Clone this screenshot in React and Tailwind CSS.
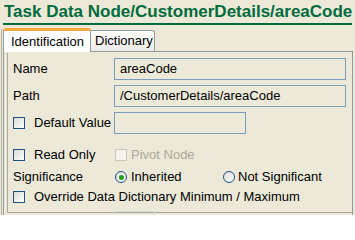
import React from 'react'

const font = { fontFamily: '"Liberation Sans", Arial, sans-serif' }

function Check({ disabled }) {
  return (
    <span
      className={
        'inline-block w-[12px] h-[12px] border shrink-0 ' +
        (disabled
          ? 'border-[#CAC8BB] bg-[#F4F3EE]'
          : 'border-[#1C5180] bg-gradient-to-br from-[#DCDCD7] to-white')
      }
    />
  )
}

function Radio({ checked }) {
  return (
    <span className="relative inline-flex items-center justify-center w-[12px] h-[12px] rounded-full border border-[#1C5180] bg-gradient-to-br from-[#DCDCD7] to-white shrink-0">
      {checked && <span className="w-[5px] h-[5px] rounded-full bg-[#21A121]" />}
    </span>
  )
}

function Field({ value, w = 'w-[232px]' }) {
  return (
    <div className={`${w} h-[22px] border border-[#7F9DB9] bg-[#ECE9D8] flex items-center px-[5px] text-[13px] text-black`}>
      {value}
    </div>
  )
}

export default function App() {
  return (
    <div className="w-[355px] h-[215px] bg-[#ECE9D8] overflow-hidden relative text-black" style={font}>
      <div className="absolute left-[1px] top-[29px] bottom-0 w-px bg-[#B5B2A3]" />
      <div className="mx-[3px] pl-[1px] h-[25px] border-b-2 border-[#006B3C] text-[#006B3C] font-bold text-[17px] leading-[24px] whitespace-nowrap">
        Task Data Node/CustomerDetails/areaCode
      </div>

      <div className="flex items-end ml-[3px] mt-[2px] h-[24px]">
        <div className="w-[88px] h-[24px] bg-white border-x border-[#919B9C] border-t-[3px] border-t-[#F5A940] rounded-t-[3px] flex items-center pl-[7px] text-[13px] relative z-10 -mb-px">
          Identification
        </div>
        <div className="w-[64px] h-[21px] bg-gradient-to-b from-white to-[#ECEBE6] border-t border-r border-[#919B9C] rounded-tr-[3px] flex items-center pl-[4px] text-[13px]">
          Dictionary
        </div>
      </div>

      <div className="ml-[3px] w-[350px] h-[170px] border border-[#919B9C] border-b-0 bg-[#ECE9D8] pl-[3px] pt-[1px]">
        <div className="h-[160px] border-l border-b border-[#ACA899] pl-[5px] pt-[5px] text-[13px]">
          <div className="flex items-center h-[22px]">
            <span className="w-[101px]">Name</span>
            <Field value="areaCode" />
          </div>
          <div className="flex items-center h-[22px] mt-[5px]">
            <span className="w-[101px]">Path</span>
            <Field value="/CustomerDetails/areaCode" />
          </div>
          <div className="flex items-center h-[22px] mt-[5px]">
            <div className="w-[101px] flex items-center gap-[9px]">
              <Check />
              <span>Default Value</span>
            </div>
            <Field value="" w="w-[132px]" />
          </div>
          <div className="flex items-center h-[22px] mt-[10px]">
            <div className="w-[102px] flex items-center gap-[9px]">
              <Check />
              <span>Read Only</span>
            </div>
            <div className="flex items-center gap-[4px] text-[#ACA899]">
              <Check disabled />
              <span>Pivot Node</span>
            </div>
          </div>
          <div className="flex items-center h-[20px] mt-[1px]">
            <span className="w-[102px]">Significance</span>
            <div className="w-[108px] flex items-center gap-[4px]">
              <Radio checked />
              <span>Inherited</span>
            </div>
            <div className="flex items-center gap-[3px]">
              <Radio />
              <span>Not Significant</span>
            </div>
          </div>
          <div className="flex items-center h-[20px]">
            <div className="flex items-center gap-[9px]">
              <Check />
              <span>Override Data Dictionary Minimum / Maximum</span>
            </div>
          </div>
          <div className="ml-[101px] mt-[4px] w-[41px] h-[4px] border-t border-x border-[#DCDAD0]" />
        </div>
      </div>
    </div>
  )
}
